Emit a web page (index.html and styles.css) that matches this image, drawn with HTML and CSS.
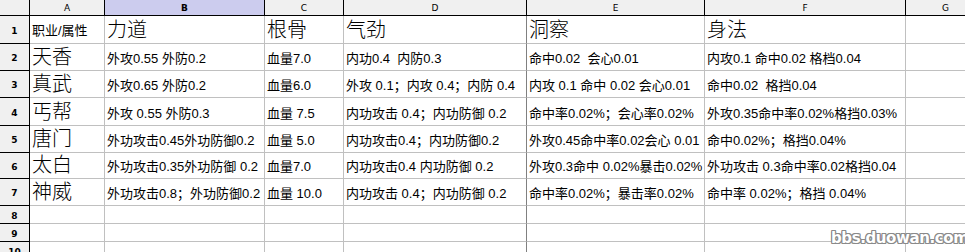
FILE: index.html
```html
<!DOCTYPE html>
<html lang="zh">
<head>
<meta charset="utf-8">
<link rel="stylesheet" href="styles.css">
</head>
<body>
<div class="sheet">
  <div class="grid">
    <div class="corner"></div>
    <div class="ch">A</div>
    <div class="ch sel">B</div>
    <div class="ch">C</div>
    <div class="ch">D</div>
    <div class="ch">E</div>
    <div class="ch">F</div>
    <div class="ch">G</div>

    <div class="rh">1</div>
    <div class="c mid">职业/属性</div>
    <div class="c big">力道</div>
    <div class="c big">根骨</div>
    <div class="c big">气劲</div>
    <div class="c big dl">洞察</div>
    <div class="c big">身法</div>
    <div class="c"></div>

    <div class="rh">2</div>
    <div class="c big">天香</div>
    <div class="c">外攻0.55 外防0.2</div>
    <div class="c">血量7.0</div>
    <div class="c">内功0.4&nbsp; 内防0.3</div>
    <div class="c dl">命中0.02&nbsp; 会心0.01</div>
    <div class="c">内攻0.1 命中0.02 格档0.04</div>
    <div class="c"></div>

    <div class="rh">3</div>
    <div class="c big">真武</div>
    <div class="c">外攻0.65 外防0.2</div>
    <div class="c">血量6.0</div>
    <div class="c">外攻 0.1；内攻 0.4；内防 0.4</div>
    <div class="c dl">内攻 0.1 命中 0.02 会心0.01</div>
    <div class="c">命中0.02&nbsp; 格挡0.04</div>
    <div class="c"></div>

    <div class="rh">4</div>
    <div class="c big">丐帮</div>
    <div class="c">外攻 0.55 外防0.3</div>
    <div class="c">血量 7.5</div>
    <div class="c">内功攻击 0.4；内功防御 0.2</div>
    <div class="c dl">命中率0.02%；会心率0.02%</div>
    <div class="c">外攻0.35命中率0.02%格挡0.03%</div>
    <div class="c"></div>

    <div class="rh">5</div>
    <div class="c big">唐门</div>
    <div class="c">外功攻击0.45外功防御0.2</div>
    <div class="c">血量 5.0</div>
    <div class="c">内功攻击0.4；内功防御0.2</div>
    <div class="c dl">外攻0.45命中率0.02会心 0.01</div>
    <div class="c">命中0.02%；格挡0.04%</div>
    <div class="c"></div>

    <div class="rh">6</div>
    <div class="c big">太白</div>
    <div class="c">外功攻击0.35外功防御 0.2</div>
    <div class="c">血量7.0</div>
    <div class="c">内功攻击0.4 内功防御 0.2</div>
    <div class="c dl">外攻0.3命中 0.02%暴击0.02%</div>
    <div class="c">外功攻击 0.3命中率0.02格挡0.04</div>
    <div class="c"></div>

    <div class="rh">7</div>
    <div class="c big">神威</div>
    <div class="c">外功攻击0.8；外功防御0.2</div>
    <div class="c">血量 10.0</div>
    <div class="c">内功攻击 0.4；内功防御 0.2</div>
    <div class="c dl">命中率0.02%；暴击率0.02%</div>
    <div class="c">命中率 0.02%；格挡 0.04%</div>
    <div class="c"></div>

    <div class="rh">8</div>
    <div class="c"></div><div class="c"></div><div class="c"></div><div class="c"></div><div class="c dl"></div><div class="c"></div><div class="c"></div>

    <div class="rh">9</div>
    <div class="c"></div><div class="c"></div><div class="c"></div><div class="c"></div><div class="c dl"></div><div class="c"></div><div class="c"></div>

    <div class="rh">10</div>
    <div class="c"></div><div class="c"></div><div class="c"></div><div class="c"></div><div class="c dl"></div><div class="c"></div><div class="c"></div>
  </div>
  <div class="watermark">bbs.duowan.com</div>
</div>
</body>
</html>
```

FILE: styles.css
```css
html, body {
  margin: 0;
  padding: 0;
  background: #ffffff;
  overflow: hidden;
}

.sheet {
  position: relative;
  width: 965px;
  height: 252px;
  overflow: hidden;
  font-family: "Liberation Sans", "Noto Sans CJK SC", sans-serif;
  color: #000;
}

.grid {
  display: grid;
  grid-template-columns: 30px 75px 160px 79px 183px 178px 201px 80px;
  grid-template-rows: 16px 28px 27px 27px 28px 27px 26px 27px 18px 18px 18px;
}

.corner {
  background: #f0f0f0;
  border-right: 1px solid #000;
  border-bottom: 1px solid #000;
  box-sizing: border-box;
}

.ch {
  box-sizing: border-box;
  background: #f0f0f0;
  border-right: 1px solid #000;
  border-bottom: 1px solid #000;
  font-family: "DejaVu Sans", sans-serif;
  font-size: 9px;
  display: flex;
  align-items: center;
  justify-content: center;
  padding-top: 1px;
}

.ch.sel {
  background: #ccccee;
  font-weight: bold;
}

.rh {
  box-sizing: border-box;
  background: #f0f0f0;
  border-right: 1px solid #000;
  border-bottom: 1px solid #000;
  font-family: "DejaVu Sans", sans-serif;
  font-weight: bold;
  font-size: 9px;
  display: flex;
  align-items: center;
  justify-content: center;
  padding-top: 2px;
}

.c {
  box-sizing: border-box;
  border-right: 1px solid #c0c0c0;
  border-bottom: 1px solid #c0c0c0;
  font-size: 13px;
  line-height: 15px;
  white-space: nowrap;
  overflow: hidden;
  display: flex;
  align-items: flex-end;
  padding: 0 0 4px 2px;
}

.c.dl {
  border-left: 1px solid #808080;
  margin-left: -1px;
}

.c.big {
  font-size: 20px;
  line-height: 22px;
  font-weight: 300;
  padding-bottom: 2px;
}

.c.mid {
  padding-bottom: 5px;
}

.watermark {
  position: absolute;
  left: 831px;
  top: 229px;
  font-family: "DejaVu Sans", sans-serif;
  font-size: 15px;
  font-weight: bold;
  color: #ffffff;
  letter-spacing: -0.4px;
  white-space: nowrap;
  text-shadow:
    1px 0 0 #8a8a8a, -1px 0 0 #8a8a8a, 0 1px 0 #8a8a8a, 0 -1px 0 #8a8a8a,
    1px 1px 0 #8a8a8a, -1px -1px 0 #8a8a8a, 1px -1px 0 #8a8a8a, -1px 1px 0 #8a8a8a;
}
```
